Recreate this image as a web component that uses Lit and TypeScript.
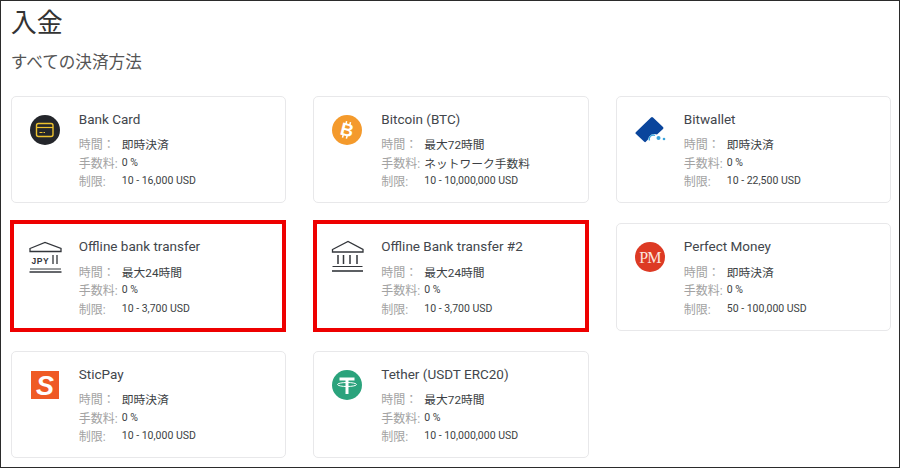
import { LitElement, html, svg, css } from 'lit';
import { customElement } from 'lit/decorators.js';

const icons: Record<string, unknown> = {
  card: svg`
    <circle cx="15" cy="15" r="15" fill="#24262b" />
    <rect x="6.500" y="8.500" width="16.500" height="13" rx="2" fill="none" stroke="#eec22e" stroke-width="1.400" />
    <path d="M7 12.500h16" stroke="#eec22e" stroke-width="1.200" />
    <path d="M9.500 17.500h3M13.500 17.500h1.500" stroke="#eec22e" stroke-width="1.200" />
  `,
  btc: svg`
    <circle cx="15" cy="15" r="15" fill="#f49a2c" />
    <g transform="rotate(14 15 15)" fill="none" stroke="#fff">
      <text x="15" y="21" text-anchor="middle" font-family="Liberation Sans" font-weight="700" font-size="18" fill="#fff" stroke="none">B</text>
      <path d="M12.500 6.500v3M16.500 6.500v3M12.500 20.500v3M16.500 20.500v3" stroke-width="1.500" />
    </g>
  `,
  bitwallet: svg`
    <path d="M0.500 18.500 Q0 18 1 17 L16 2.500 Q17 1.500 18 2.500 L28 12 Q29 13 28 14 L22 19.500 A6.500 6.500 0 0 0 13 24.500 L10.500 27 Q10 27.500 9 26.500 Z" fill="#0a459c" />
    <path d="M14.500 25.500 A4 4 0 0 1 20 20.500" fill="none" stroke="#3aa3dc" stroke-width="1.300" />
    <circle cx="23.500" cy="23" r="2" fill="#3aa3dc" />
    <circle cx="29" cy="24" r="1.300" fill="#3aa3dc" />
  `,
  jpy: svg`
    <path d="M0 6.500 L15 0.500 L31 6.500 V9.500 H0 Z" fill="none" stroke="#33363b" stroke-width="1.300" />
    <text x="1.500" y="22" font-family="Liberation Sans" font-weight="700" font-size="8.500" letter-spacing=".5" fill="#33363b">JPY</text>
    <path d="M23 13v9M27 13v9" stroke="#33363b" stroke-width="1.300" />
    <path d="M0 27h31" stroke="#33363b" stroke-width="1" />
    <path d="M-0.500 30h32" stroke="#33363b" stroke-width="1.400" />
  `,
  bank: svg`
    <path d="M0.500 7.500 L16 -0.500 L31 7.500 V10 H0.500 Z" fill="none" stroke="#33363b" stroke-width="1.300" />
    <path d="M6 13v9M11.500 13v9M18 13v9M25 13v9" stroke="#33363b" stroke-width="1.500" />
    <path d="M0.500 24.500h30" stroke="#33363b" stroke-width="1" />
    <path d="M0 29h31" stroke="#33363b" stroke-width="1.600" />
  `,
  pm: svg`
    <circle cx="15" cy="15" r="15" fill="#dd3a24" />
    <text x="15" y="20.500" text-anchor="middle" font-family="Liberation Serif" font-size="16" letter-spacing="-.8" fill="#fbe6df">PM</text>
  `,
  stic: svg`
    <rect x="1" y="1" width="28" height="28" fill="#ef5a24" />
    <text x="15" y="25" text-anchor="middle" font-family="Liberation Sans" font-weight="700" font-style="italic" font-size="27" fill="#fff">S</text>
  `,
  tether: svg`
    <circle cx="15" cy="15" r="15" fill="#2ba37c" />
    <path d="M7.500 7.500h15v3h-6v13.500h-3V10.500h-6z" fill="#fff" />
    <ellipse cx="15" cy="14.500" rx="9.500" ry="2" fill="none" stroke="#fff" stroke-width="1" />
  `,
};

const methods = [
  { icon: 'card', name: 'Bank Card', time: '即時決済', fee: '0 %', limit: '10 - 16,000 USD' },
  { icon: 'btc', name: 'Bitcoin (BTC)', time: '最大72時間', fee: 'ネットワーク手数料', limit: '10 - 10,000,000 USD' },
  { icon: 'bitwallet', name: 'Bitwallet', time: '即時決済', fee: '0 %', limit: '10 - 22,500 USD' },
  { icon: 'jpy', name: 'Offline bank transfer', time: '最大24時間', fee: '0 %', limit: '10 - 3,700 USD', marked: true },
  { icon: 'bank', name: 'Offline Bank transfer #2', time: '最大24時間', fee: '0 %', limit: '10 - 3,700 USD', marked: true },
  { icon: 'pm', name: 'Perfect Money', time: '即時決済', fee: '0 %', limit: '50 - 100,000 USD' },
  { icon: 'stic', name: 'SticPay', time: '即時決済', fee: '0 %', limit: '10 - 10,000 USD' },
  { icon: 'tether', name: 'Tether (USDT ERC20)', time: '最大72時間', fee: '0 %', limit: '10 - 10,000,000 USD' },
];

@customElement('app-root')
export class AppRoot extends LitElement {
  static styles = css`
    :host {
      display: block;
      width: 902px;
      height: 468px;
      overflow: hidden;
      background: #fff;
      font-family: Roboto, 'Noto Sans CJK JP', sans-serif;
    }
    .frame {
      box-sizing: border-box;
      width: 900px;
      height: 468px;
      border: 1px solid #2b2b2b;
      padding: 5px 0 0 9.800px;
    }
    h1 {
      margin: 0;
      font-size: 26px;
      line-height: 34px;
      font-weight: 400;
      color: #333;
    }
    h2 {
      margin: 11px 0 0;
      font-size: 16.600px;
      line-height: 24px;
      font-weight: 400;
      color: #555;
    }
    .grid {
      display: grid;
      grid-template-columns: repeat(3, 275.500px);
      grid-auto-rows: 107.500px;
      column-gap: 27px;
      row-gap: 20px;
      margin-top: 20.800px;
    }
    .card {
      position: relative;
      box-sizing: border-box;
      display: flex;
      gap: 18px;
      padding: 13px 0 0 18px;
      border: 1px solid #e8e8ea;
      border-radius: 5px;
      background: #fff;
    }
    .marked::after {
      content: '';
      position: absolute;
      inset: -4px -1px -2.500px -1.500px;
      border: 4.500px solid #ee0000;
    }
    .icon {
      width: 31px;
      height: 31px;
      margin-top: 5px;
      flex: none;
      overflow: visible;
    }
    .name {
      font-size: 13.500px;
      line-height: 18px;
      color: #42464c;
    }
    .rows {
      display: grid;
      grid-template-columns: 43px auto;
      grid-auto-rows: 18.500px;
      margin-top: 6.500px;
      font-size: 10.500px;
      align-items: center;
    }
    .label {
      color: #a3a3a3;
      font-size: 12px;
      white-space: nowrap;
    }
    .value {
      color: #3c3f44;
    }
    .cjk {
      font-size: 11.750px;
    }
  `;

  render() {
    return html`
      <div class="frame">
        <h1>入金</h1>
        <h2>すべての決済方法</h2>
        <div class="grid">
          ${methods.map(
            m => html`
              <div class="card ${m.marked ? 'marked' : ''}">
                <svg class="icon" viewBox="0 0 31 31">${icons[m.icon]}</svg>
                <div>
                  <div class="name">${m.name}</div>
                  <div class="rows">
                    <span class="label">時間：</span><span class="value cjk">${m.time}</span>
                    <span class="label">手数料:</span><span class="value ${m.fee === '0 %' ? '' : 'cjk'}">${m.fee}</span>
                    <span class="label">制限:</span><span class="value">${m.limit}</span>
                  </div>
                </div>
              </div>
            `,
          )}
        </div>
      </div>
    `;
  }
}
